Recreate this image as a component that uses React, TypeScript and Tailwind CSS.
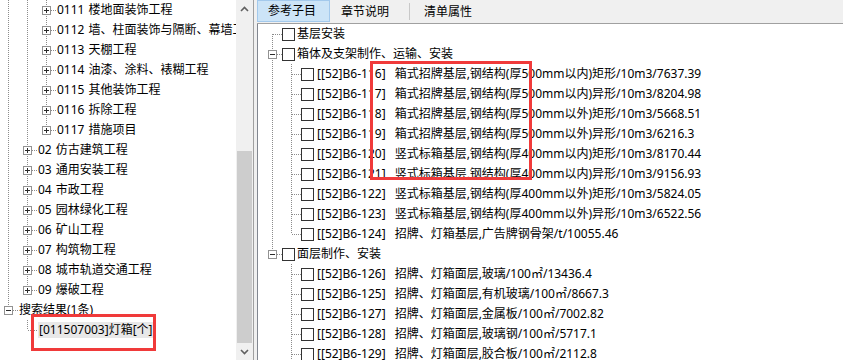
import React from 'react'

type Cell = 'pipe' | 'tee' | 'elbow' | 'first' | 'blank'
type Box = '+' | '-' | undefined

const LINE = '#8c8c8c'

// one indent column of the tree, with its dotted connectors and the +/- box
function Gutter({ kind, box }: { kind: Cell; box?: Box }) {
  return (
    <svg width="19" height="20" className="shrink-0" shapeRendering="crispEdges">
      {(kind === 'pipe' || kind === 'tee') && (
        <line x1="8.5" y1="0" x2="8.5" y2="20" stroke={LINE} strokeDasharray="1 1" />
      )}
      {kind === 'elbow' && <line x1="8.5" y1="0" x2="8.5" y2="10" stroke={LINE} strokeDasharray="1 1" />}
      {kind === 'first' && <line x1="8.5" y1="10" x2="8.5" y2="20" stroke={LINE} strokeDasharray="1 1" />}
      {(kind === 'tee' || kind === 'elbow' || kind === 'first') && (
        <line x1="9" y1="10.5" x2="19" y2="10.5" stroke={LINE} strokeDasharray="1 1" />
      )}
      {box && (
        <g>
          <rect x="4.5" y="6.5" width="8" height="8" fill="#fff" stroke="#929292" />
          <line x1="6" y1="10.5" x2="11" y2="10.5" stroke="#2b2b2b" />
          {box === '+' && <line x1="8.5" y1="8" x2="8.5" y2="13" stroke="#2b2b2b" />}
        </g>
      )}
    </svg>
  )
}

interface LeftRow {
  cells: Cell[]
  box?: Box
  code?: string
  text: string
  selected?: boolean
}

const leftRows: LeftRow[] = [
  { cells: ['pipe', 'pipe', 'tee'], box: '+', code: '0111', text: '楼地面装饰工程' },
  { cells: ['pipe', 'pipe', 'tee'], box: '+', code: '0112', text: '墙、柱面装饰与隔断、幕墙工程' },
  { cells: ['pipe', 'pipe', 'tee'], box: '+', code: '0113', text: '天棚工程' },
  { cells: ['pipe', 'pipe', 'tee'], box: '+', code: '0114', text: '油漆、涂料、裱糊工程' },
  { cells: ['pipe', 'pipe', 'tee'], box: '+', code: '0115', text: '其他装饰工程' },
  { cells: ['pipe', 'pipe', 'tee'], box: '+', code: '0116', text: '拆除工程' },
  { cells: ['pipe', 'pipe', 'elbow'], box: '+', code: '0117', text: '措施项目' },
  { cells: ['pipe', 'tee'], box: '+', code: '02', text: '仿古建筑工程' },
  { cells: ['pipe', 'tee'], box: '+', code: '03', text: '通用安装工程' },
  { cells: ['pipe', 'tee'], box: '+', code: '04', text: '市政工程' },
  { cells: ['pipe', 'tee'], box: '+', code: '05', text: '园林绿化工程' },
  { cells: ['pipe', 'tee'], box: '+', code: '06', text: '矿山工程' },
  { cells: ['pipe', 'tee'], box: '+', code: '07', text: '构筑物工程' },
  { cells: ['pipe', 'tee'], box: '+', code: '08', text: '城市轨道交通工程' },
  { cells: ['pipe', 'elbow'], box: '+', code: '09', text: '爆破工程' },
  { cells: ['elbow'], box: '-', text: '搜索结果(1条)' },
  { cells: ['blank', 'elbow'], text: '[011507003]灯箱[个]', selected: true },
]

interface RightRow {
  cells: Cell[]
  box?: Box
  id?: string
  text: string
}

const rightRows: RightRow[] = [
  { cells: ['first'], text: '基层安装' },
  { cells: ['tee'], box: '-', text: '箱体及支架制作、运输、安装' },
  { cells: ['pipe', 'tee'], id: '[[52]B6-116]', text: '箱式招牌基层,钢结构(厚500mm以内)矩形/10m3/7637.39' },
  { cells: ['pipe', 'tee'], id: '[[52]B6-117]', text: '箱式招牌基层,钢结构(厚500mm以内)异形/10m3/8204.98' },
  { cells: ['pipe', 'tee'], id: '[[52]B6-118]', text: '箱式招牌基层,钢结构(厚500mm以外)矩形/10m3/5668.51' },
  { cells: ['pipe', 'tee'], id: '[[52]B6-119]', text: '箱式招牌基层,钢结构(厚500mm以外)异形/10m3/6216.3' },
  { cells: ['pipe', 'tee'], id: '[[52]B6-120]', text: '竖式标箱基层,钢结构(厚400mm以内)矩形/10m3/8170.44' },
  { cells: ['pipe', 'tee'], id: '[[52]B6-121]', text: '竖式标箱基层,钢结构(厚400mm以内)异形/10m3/9156.93' },
  { cells: ['pipe', 'tee'], id: '[[52]B6-122]', text: '竖式标箱基层,钢结构(厚400mm以外)矩形/10m3/5824.05' },
  { cells: ['pipe', 'tee'], id: '[[52]B6-123]', text: '竖式标箱基层,钢结构(厚400mm以外)异形/10m3/6522.56' },
  { cells: ['pipe', 'elbow'], id: '[[52]B6-124]', text: '招牌、灯箱基层,广告牌钢骨架/t/10055.46' },
  { cells: ['elbow'], box: '-', text: '面层制作、安装' },
  { cells: ['blank', 'tee'], id: '[[52]B6-126]', text: '招牌、灯箱面层,玻璃/100㎡/13436.4' },
  { cells: ['blank', 'tee'], id: '[[52]B6-125]', text: '招牌、灯箱面层,有机玻璃/100㎡/8667.3' },
  { cells: ['blank', 'tee'], id: '[[52]B6-127]', text: '招牌、灯箱面层,金属板/100㎡/7002.82' },
  { cells: ['blank', 'tee'], id: '[[52]B6-128]', text: '招牌、灯箱面层,玻璃钢/100㎡/5717.1' },
  { cells: ['blank', 'tee'], id: '[[52]B6-129]', text: '招牌、灯箱面层,胶合板/100㎡/2112.8' },
]

function Chevron({ down }: { down?: boolean }) {
  return (
    <svg width="9" height="6" viewBox="0 0 9 6">
      <path
        d={down ? 'M1 1 L4.5 4.5 L8 1' : 'M1 5 L4.5 1.5 L8 5'}
        fill="none"
        stroke="#606060"
        strokeWidth="1.6"
      />
    </svg>
  )
}

export default function App() {
  return (
    <div className="relative flex w-[843px] h-[360px] overflow-hidden bg-white text-[12px] text-black font-['Noto_Sans','Noto_Sans_CJK_SC',sans-serif]">
      {/* left: bill tree */}
      <div className="flex w-[253px] shrink-0">
        <div className="w-[236px] overflow-hidden">
          {leftRows.map((r, i) => (
            <div key={i} className="flex items-center h-[20px] whitespace-nowrap">
              {r.cells.map((c, j) => (
                <Gutter key={j} kind={c} box={j === r.cells.length - 1 ? r.box : undefined} />
              ))}
              {r.code && <span>{r.code}</span>}
              <span
                className={
                  (r.selected ? 'bg-[#e8e8e8] leading-[16px] px-px' : 'leading-[20px]') + (r.code ? ' ml-[4px]' : '')
                }
              >
                {r.text}
              </span>
            </div>
          ))}
        </div>
        <div className="flex flex-col w-[17px] bg-[#f0f0f0]">
          <div className="flex items-center justify-center h-[17px]">
            <Chevron />
          </div>
          <div className="flex flex-col justify-end flex-1">
            <div className="h-[192px] mx-px bg-[#cdcdcd]" />
          </div>
          <div className="flex items-center justify-center h-[17px]">
            <Chevron down />
          </div>
        </div>
      </div>
      <div className="w-px bg-[#a0a0a0] shrink-0" />
      <div className="w-[3px] bg-[#f0f0f0] shrink-0" />

      {/* right: reference items */}
      <div className="flex flex-col flex-1 min-w-0">
        <div className="flex items-stretch h-[24px] bg-[#f0f0f0] border-b border-[#a0a0a0]">
          <div className="flex items-center w-[73px] pl-[10px] bg-[#cce4f7] border border-[#a3c9ec] mb-[1px]">参考子目</div>
          <div className="flex items-center w-[79px] pl-[11px]">章节说明</div>
          <div className="w-px bg-[#c8c8c8] my-[3px]" />
          <div className="flex items-center pl-[14px]">清单属性</div>
        </div>
        <div className="flex-1 border-l border-[#828790] pl-[6px] overflow-hidden">
          {rightRows.map((r, i) => (
            <div key={i} className="flex items-center h-[20px] whitespace-nowrap">
              {r.cells.map((c, j) => (
                <Gutter key={j} kind={c} box={j === r.cells.length - 1 ? r.box : undefined} />
              ))}
              <span className="w-[13px] h-[13px] -ml-px border border-[#333] bg-white shrink-0" />
              {r.id ? (
                <>
                  <span className="ml-[3px]">{r.id}</span>
                  <span className="ml-[9px]">{r.text}</span>
                </>
              ) : (
                <span className="ml-[2px]">{r.text}</span>
              )}
            </div>
          ))}
        </div>
      </div>

      {/* red highlight frames */}
      <div className="absolute left-[31px] top-[314px] w-[125px] h-[37px] border-[3px] border-[#f03a3a]" />
      <div className="absolute left-[370px] top-[61px] w-[162px] h-[119px] border-[3px] border-[#f03a3a]" />
    </div>
  )
}
